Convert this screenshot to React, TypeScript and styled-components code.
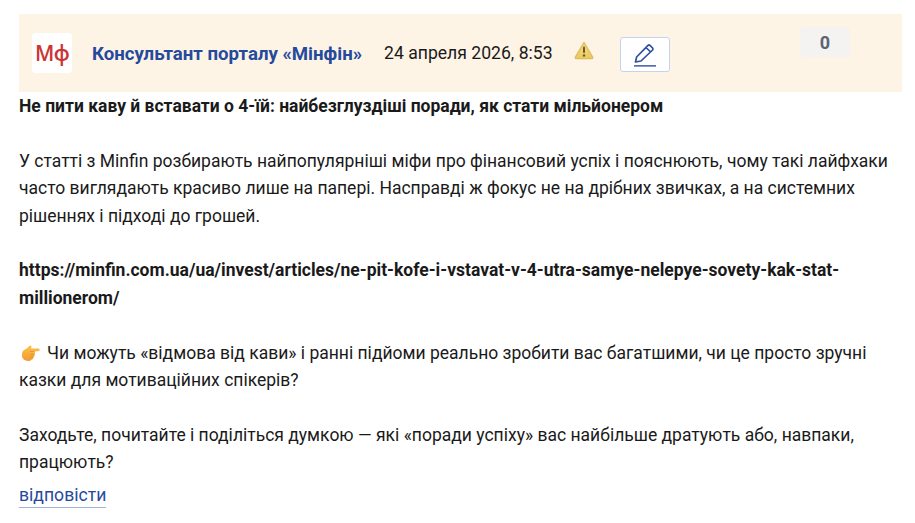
import React from "react";
import styled, { createGlobalStyle } from "styled-components";

const Global = createGlobalStyle`
  html, body { margin: 0; padding: 0; background: #fff; }
  body { font-family: Roboto, "Noto Sans", sans-serif; color: #1a1a1a; }
`;
const Post = styled.div`
  width: 883px;
  padding: 14px 13px 0 19px;
`;
const Head = styled.header`
  height: 78px;
  background: #fdf4e6;
  display: flex;
  align-items: flex-start;
  position: relative;
`;
const Logo = styled.div`
  width: 40px;
  height: 40px;
  margin: 19px 0 0 13px;
  background: #fff;
  border-radius: 4px;
  display: flex;
  align-items: center;
  justify-content: center;
  font: 600 21px "Open Sans", sans-serif;
  letter-spacing: -0.8px;
  color: #cb3535;
`;
const Author = styled.a`
  margin: 28px 0 0 20px;
  font: 700 18.65px/24px Roboto, sans-serif;
  color: #254a9c;
  white-space: nowrap;
`;
const DateText = styled.span`
  margin: 27px 0 0 22px;
  font: 400 17.6px/24px Roboto, sans-serif;
  color: #1a1a1a;
  white-space: nowrap;
`;
const Warn = styled.svg`
  margin: 27px 0 0 21px;
  width: 20px;
  height: 19px;
`;
const EditButton = styled.button`
  width: 50px;
  height: 35px;
  margin: 23px 0 0 26px;
  padding: 0;
  border: 1px solid #c5d4ee;
  border-radius: 3px;
  background: #fff;
  display: flex;
  align-items: center;
  justify-content: center;
`;
const Score = styled.div`
  position: absolute;
  left: 781px;
  top: 13px;
  width: 50px;
  height: 30px;
  background: #f4f3f1;
  border-radius: 4px;
  display: flex;
  align-items: center;
  justify-content: center;
  font: 700 18px Roboto, sans-serif;
  color: #5b6472;
`;
const Body = styled.div`
  font-size: 17.5px;
  line-height: 27.4px;
  margin-top: 1px;
`;
const Para = styled.p`
  margin: 0 0 27.4px;
`;
const Title = styled.p`
  margin: 0 0 27.4px;
  font-weight: 700;
`;
const Strong = styled.p`
  margin: 0 0 27.4px;
  font-weight: 700;
`;
const LastPara = styled.p`
  margin: 0;
`;
const Reply = styled.a`
  display: inline-block;
  margin-top: 8px;
  font-size: 17.6px;
  line-height: 20px;
  color: #254a9c;
  border-bottom: 1px solid #9fb2d8;
  padding-bottom: 2px;
`;
const Hand = styled.svg`
  width: 20px;
  height: 18px;
  vertical-align: -3px;
  margin-right: 6px;
  margin-left: 2px;
`;

export default function App() {
  return (
    <Post>
      <Global />
      <Head>
        <Logo>Мф</Logo>
        <Author>Консультант порталу «Мінфін»</Author>
        <DateText>24 апреля 2026, 8:53</DateText>
        <Warn viewBox="0 0 20 19">
          <defs>
            <linearGradient id="warnFill" x1="0" y1="0" x2="0" y2="1">
              <stop offset="0" stopColor="#f3dc86" />
              <stop offset="1" stopColor="#ecc95f" />
            </linearGradient>
          </defs>
          <path d="M10 1.5 L18.6 16.2 Q19 17.6 17.6 17.6 H2.4 Q1 17.6 1.4 16.2 Z" fill="url(#warnFill)" stroke="#e0bd58" strokeWidth="1.4" strokeLinejoin="round" />
          <rect x="9" y="5.5" width="2" height="6.5" rx="1" fill="#6a5a2a" />
          <circle cx="10" cy="14.5" r="1.2" fill="#6a5a2a" />
        </Warn>
        <EditButton aria-label="edit">
          <svg width="24" height="26" viewBox="0 0 24 26" fill="none">
            <path d="M2.5 20 L3.6 15 L15 3.4 Q16 2.6 17 3.4 L19.6 6 Q20.4 7 19.6 8 L8 19 Z M13 5.5 L17.6 10" stroke="#2f509f" strokeWidth="1.7" strokeLinejoin="round" />
            <rect x="1" y="23" width="22" height="1.7" fill="#5470b0" />
          </svg>
        </EditButton>
        <Score>0</Score>
      </Head>
      <Body>
        <Title>Не пити каву й вставати о 4-їй: найбезглуздіші поради, як стати мільйонером</Title>
        <Para>У статті з Minfin розбирають найпопулярніші міфи про фінансовий успіх і пояснюють, чому такі лайфхаки часто виглядають красиво лише на папері. Насправді ж фокус не на дрібних звичках, а на системних рішеннях і підході до грошей.</Para>
        <Strong>https://minfin.com.ua/ua/invest/articles/ne-pit-kofe-i-vstavat-v-4-utra-samye-nelepye-sovety-kak-stat-millionerom/</Strong>
        <Para>
          <Hand viewBox="0 0 20 18">
            <defs>
              <linearGradient id="handFill" x1="0" y1="0" x2="0" y2="1">
                <stop offset="0" stopColor="#fcc24a" />
                <stop offset="1" stopColor="#f49a32" />
              </linearGradient>
            </defs>
            <path d="M1 9.5 Q1.5 6 5 5 L9 1.5 Q10.5 1 10.5 3 L10 4.5 L18 4.5 Q19.6 5.5 18 7 L13.5 7.5 Q14.6 9 13.6 10.5 Q13.8 12.5 12.4 13.2 Q12.4 15.4 10.4 15.8 Q9.5 17.2 7 17 Q2 16.5 1 12.5 Z" fill="url(#handFill)" />
            <path d="M9 7.5 L13.5 7.5 M9 10.5 L13.6 10.5 M9 13.2 L12.4 13.2" stroke="#e58c2a" strokeWidth="0.7" />
          </Hand>
          Чи можуть «відмова від кави» і ранні підйоми реально зробити вас багатшими, чи це просто зручні казки для мотиваційних спікерів?
        </Para>
        <LastPara>Заходьте, почитайте і поділіться думкою — які «поради успіху» вас найбільше дратують або, навпаки, працюють?</LastPara>
        <Reply>відповісти</Reply>
      </Body>
    </Post>
  );
}
